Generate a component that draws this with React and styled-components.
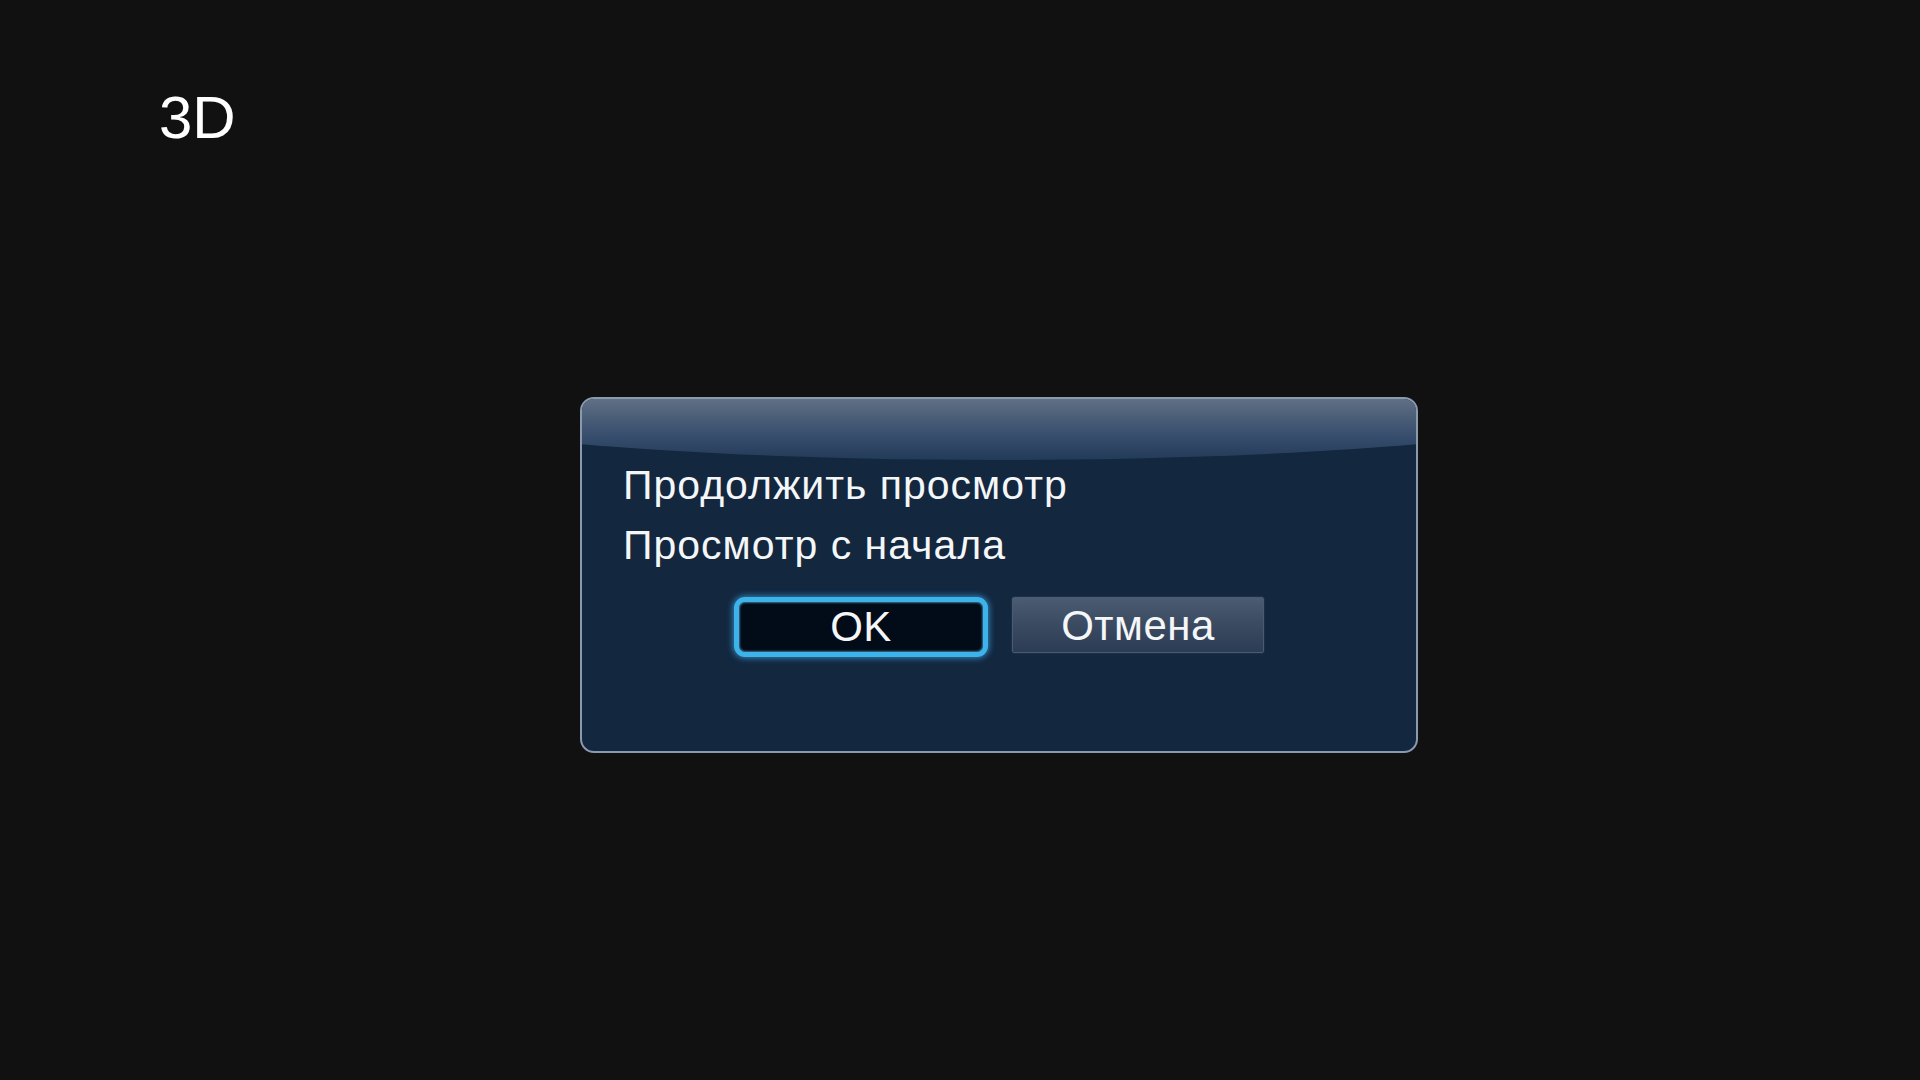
import React from "react";
import styled, { createGlobalStyle } from "styled-components";

const Global = createGlobalStyle`
  html, body { margin: 0; padding: 0; background: #111111; }
  body { font-family: "Liberation Sans", Arial, sans-serif; }
`;

const Screen = styled.div`
  width: 1920px;
  height: 1080px;
  background: #111111;
  box-sizing: border-box;
  padding-top: 88px;
  overflow: hidden;
  display: flex;
  flex-direction: column;
  align-items: flex-start;
`;

const ModeLabel = styled.div`
  margin-left: 159px;
  font-family: "Liberation Sans", Arial, sans-serif;
  font-size: 60px;
  line-height: 60px;
  color: #ffffff;
`;

const Dialog = styled.div`
  position: relative;
  margin-left: 580px;
  margin-top: 249px;
  width: 838px;
  height: 356px;
  box-sizing: border-box;
  border: 2px solid #8a99ae;
  border-radius: 14px;
  background: #13273f;
  overflow: hidden;
  padding: 56px 0 0 41px;
  display: flex;
  flex-direction: column;
  &::before {
    content: "";
    position: absolute;
    left: -283px;
    width: 1400px;
    top: -99px;
    height: 160px;
    border-radius: 50%;
    background: linear-gradient(
      to bottom,
      #627286 61%,
      #4d6079 72%,
      #364c6c 86%,
      #223b58 100%
    );
    pointer-events: none;
  }
`;

const Option = styled.div`
  position: relative;
  font-family: "Liberation Sans", Arial, sans-serif;
  font-size: 41px;
  letter-spacing: 1px;
  line-height: 60px;
  color: #f4f6f8;
  white-space: nowrap;
`;

const ButtonRow = styled.div`
  position: relative;
  margin-top: 22px;
  margin-left: -41px;
  display: flex;
  justify-content: center;
  align-items: flex-start;
  gap: 24px;
`;

const Button = styled.div`
  box-sizing: border-box;
  display: flex;
  align-items: center;
  justify-content: center;
  font-family: "Liberation Sans", Arial, sans-serif;
  font-size: 42px;
  letter-spacing: 0.5px;
  color: #f4f6f8;
  width: ${(p) => (p.$focused ? "254px" : "252px")};
  height: ${(p) => (p.$focused ? "60px" : "56px")};
  border-radius: ${(p) => (p.$focused ? "11px" : "2px")};
  border: ${(p) => (p.$focused ? "5px solid #3db3ec" : "1px solid #4a5a70")};
  background: ${(p) =>
    p.$focused
      ? "#020c18"
      : "linear-gradient(to bottom, #4b5b71 0%, #3a4a61 50%, #2c3c54 100%)"};
  box-shadow: ${(p) =>
    p.$focused
      ? "0 0 6px 1px rgba(60, 170, 230, 0.75), inset 0 0 2px 1px rgba(120, 210, 255, 0.5)"
      : "0 0 2px rgba(80, 100, 130, 0.6)"};
  padding-top: ${(p) => (p.$focused ? "0" : "2px")};
`;

export default function App() {
  return (
    <>
      <Global />
      <Screen>
        <ModeLabel>3D</ModeLabel>
        <Dialog>
          <Option>Продолжить просмотр</Option>
          <Option>Просмотр с начала</Option>
          <ButtonRow>
            <Button $focused>OK</Button>
            <Button>Отмена</Button>
          </ButtonRow>
        </Dialog>
      </Screen>
    </>
  );
}
